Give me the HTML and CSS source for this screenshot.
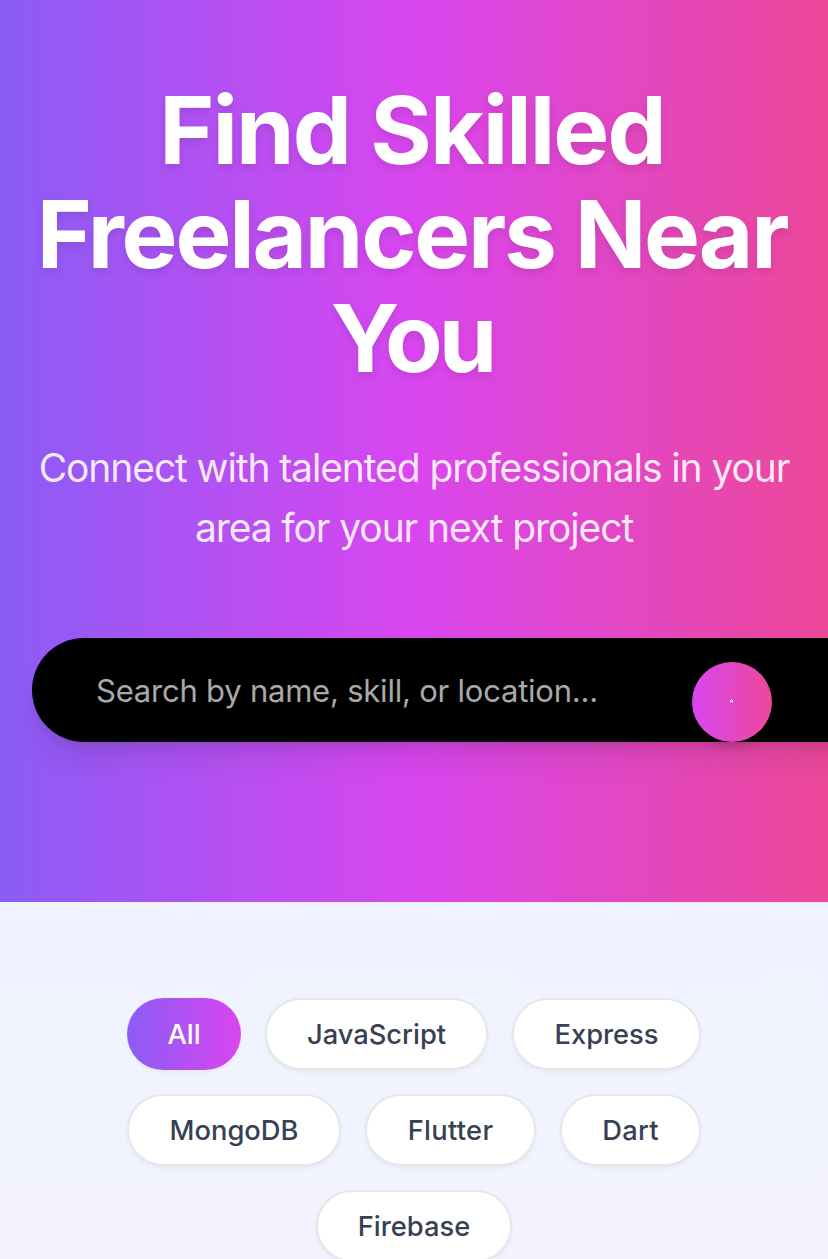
FILE: index.html
```html
<!DOCTYPE html>
<html lang="en">
<head>
<meta charset="utf-8">
<title>Find Skilled Freelancers</title>
<link rel="stylesheet" href="styles.css">
</head>
<body>
<header class="hero">
<h1 class="title"><span class="title-first">Find Skilled</span><span class="title-second">Freelancers Near</span><span class="title-third">You</span></h1>
<p class="subtitle"><span>Connect with talented professionals in your</span><span>area for your next project</span></p>
<form class="search">
<span class="placeholder">Search by name, skill, or location...</span>
<button class="search-button" type="button" aria-label="Search"><svg class="search-icon" viewBox="0 0 4 4"><path d="M1 0h1v1h1v2H0V1h1zM1 1v1h1V1z"/><path class="search-handle" d="M2 3h1v1H2z"/></svg></button>
</form>
</header>
<main class="content">
<nav class="filters">
<div class="row"><button class="chip active">All</button><button class="chip js">JavaScript</button><button class="chip express">Express</button></div>
<div class="row"><button class="chip mongo">MongoDB</button><button class="chip flutter">Flutter</button><button class="chip dart">Dart</button></div>
<div class="row"><button class="chip firebase">Firebase</button></div>
</nav>
</main>
</body>
</html>
```
FILE: styles.css
```css
* { box-sizing: border-box; }
body { margin: 0; height: 1259px; overflow: hidden; font-family: Inter, sans-serif; background: #f1f3ff; }
.hero { height: 902px; padding-top: 78px; overflow: hidden; background: linear-gradient(90deg, #8b5cf6, #d946ef 50%, #ec4899); color: #fff; }
.title { margin: 0; padding-right: 4px; font-size: 94px; line-height: 104px; font-weight: 700; text-shadow: 0 4px 8px rgba(0,0,0,.1); }
.title span, .subtitle span { display: block; width: max-content; margin: 0 auto; white-space: nowrap; }
.title .title-first { letter-spacing: -1.9px; }
.title .title-second { letter-spacing: -2.2px; }
.title .title-third { letter-spacing: -4px; }
.subtitle { margin: 48px 0 0; font-size: 39px; line-height: 60px; font-weight: 400; color: rgba(255,255,255,.88); letter-spacing: -1.1px; }
.search { display: flex; align-items: center; width: 896px; height: 104px; margin: 80px 0 0 32px; padding-left: 64px; border-radius: 52px; background: #000; box-shadow: 0 20px 30px -6px rgba(0,0,0,.1), 0 8px 12px -6px rgba(0,0,0,.1); }
.placeholder { width: 596px; flex: none; padding-top: 2px; font-size: 31px; line-height: 40px; color: #a9a9a9; letter-spacing: -.22px; white-space: nowrap; }
.search-button { display: flex; align-items: center; justify-content: center; flex: none; width: 80px; height: 80px; margin-top: 24px; padding: 0 0 2px; border: 0; border-radius: 50%; background: linear-gradient(90deg, #d946ef, #ec4899); box-shadow: 0 8px 12px -2px rgba(0,0,0,.1), 0 4px 8px -4px rgba(0,0,0,.1); }
.search-icon { width: 4px; height: 4px; fill: #fff; fill-rule: evenodd; }
.search-handle { opacity: .3; }
.content { height: 357px; padding-top: 96px; background: linear-gradient(#f0f3ff, #f2f3ff); }
.filters { display: grid; gap: 24px; }
.row { display: flex; justify-content: center; gap: 24px; }
.chip { height: 72px; padding: 1px 0 0; border: 2px solid #e5e7eb; border-radius: 36px; background: #fff; color: #374151; font: 500 27.3px/40px Inter, sans-serif; box-shadow: 0 2px 4px rgba(0,0,0,.05); }
.active { width: 114px; border: 0; background: linear-gradient(90deg, #8b5cf6, #d946ef); color: #fff; }
.js { width: 223px; }
.express { width: 189px; }
.mongo { width: 214px; }
.flutter { width: 171px; letter-spacing: .3px; }
.dart { width: 141px; letter-spacing: .2px; }
.firebase { width: 196px; }
```
